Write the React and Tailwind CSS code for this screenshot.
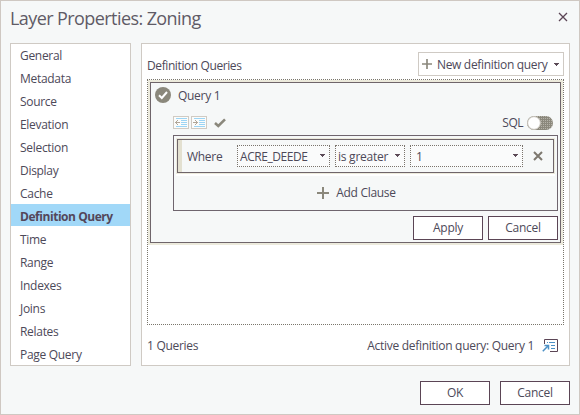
import React from "react";

const sections = [
  ["General", "tracking-[-0.3px]"],
  ["Metadata", "tracking-[-0.3px]"],
  ["Source", "tracking-[-0.3px]"],
  ["Elevation", "tracking-[-0.3px]"],
  ["Selection", "tracking-[-0.3px]"],
  ["Display", "tracking-[-0.3px]"],
  ["Cache", "tracking-[-0.3px]"],
  ["Definition Query", "tracking-[-0.45px]"],
  ["Time", "tracking-[-0.3px]"],
  ["Range", "tracking-[-0.3px]"],
  ["Indexes", "tracking-[-0.3px]"],
  ["Joins", "tracking-[-0.3px]"],
  ["Relates", "tracking-[-0.3px]"],
  ["Page Query", "tracking-[-0.3px]"],
];

function Caret({ className = "" }) {
  return (
    <svg width="5" height="3" viewBox="0 0 5 3" className={`shrink-0 ${className}`} shapeRendering="crispEdges">
      <path d="M0 0h5v1H4v1H3v1H2V2H1V1H0z" fill="#5b4a56" />
    </svg>
  );
}

function Plus({ size }) {
  return (
    <svg width={size} height={size} viewBox="0 0 12 12" className="shrink-0">
      <path d="M6 0v12M0 6h12" stroke="#8b887c" strokeWidth="2" />
    </svg>
  );
}

function IndentIcon({ right }) {
  return (
    <svg width="16" height="13" viewBox="0 0 16 13" className="shrink-0" shapeRendering="crispEdges">
      <rect x="0.5" y="0.5" width="15" height="12" fill="#fbfcfb" stroke="#d0cbc3" />
      <path d="M3 2.5h11M8 4.5h6M8 6.5h6M8 8.5h6M3 10.5h11" stroke="#9cd5f5" />
      {right ? (
        <path d="M2 6h4v1H2zM4 4h1v1H4zM5 5h1v1H5zM6 6h1v1H6zM5 7h1v1H5zM4 8h1v1H4z" fill="#b0a698" />
      ) : (
        <path d="M3 6h4v1H3zM4 4h1v1H4zM3 5h1v1H3zM2 6h1v1H2zM3 7h1v1H3zM4 8h1v1H4z" fill="#b0a698" />
      )}
    </svg>
  );
}

function Combo({ children, className }) {
  return (
    <div className={`flex h-[22px] items-center border border-dotted border-[#7a746c] bg-[#fafbfb] ${className}`}>
      <span className="mt-px grow whitespace-nowrap">{children}</span>
      <Caret className="-mt-0.5" />
    </div>
  );
}

function Button({ children }) {
  return (
    <button className="flex h-6 w-[70px] items-center justify-center border border-[#5b4555] bg-white tracking-[-0.3px]">
      {children}
    </button>
  );
}

export default function App() {
  return (
    <div className="flex h-[415px] w-[580px] flex-col border border-[#cfc8c2] bg-[#f6f8f8] font-['Open_Sans','Noto_Sans',sans-serif] text-[12px] leading-4 text-[#4d4959]">
      <header className="flex h-[42px] items-start justify-between pl-[9px] pr-[11px]">
        <h1 className="mt-[5px] text-[18px] leading-6 font-normal tracking-[-0.58px] text-[#5f5b66]">Layer Properties: Zoning</h1>
        <svg width="10" height="10" viewBox="0 0 10 10" className="mt-[11px]">
          <path d="M1 1l8 8M9 1L1 9" stroke="#5b4555" strokeWidth="1.3" />
        </svg>
      </header>

      <div className="flex h-[323px] gap-2.5 px-[9px]">
        <nav className="w-[121px] border border-[#cfcac4] bg-white">
          <ul className="-mt-px flex flex-col gap-px">
            {sections.map(([name, spacing]) => (
              <li
                key={name}
                className={`h-[22px] whitespace-nowrap pl-[9px] leading-[25px] ${spacing} ${name === "Definition Query" ? "bg-[#a1d8f8] font-bold text-[#54475a]" : ""}`}
              >
                {name}
              </li>
            ))}
          </ul>
        </nav>

        <main className="flex w-[429px] flex-col border border-[#cfcac4] bg-white pl-[5px] pr-[5px] pt-2">
          <div className="flex h-6 items-center justify-between">
            <h2 className="mt-1 tracking-[-0.4px]">Definition Queries</h2>
            <button className="flex h-6 w-[146px] items-center border border-[#cfcac4] pl-[3px] pr-1">
              <Plus size={10} />
              <span className="ml-[5px] mt-0.5 grow whitespace-nowrap text-left tracking-[-0.33px]">New definition query</span>
              <Caret />
            </button>
          </div>

          <div className="mt-[3px] h-[246px] w-[417px] border border-dotted border-[#7a766c]">
            <section className="h-[165px] border-2 border-[#eceadc]">
              <div className="flex h-[161px] flex-col border border-[#6f656a] bg-[#f6f8f8]">
                <div className="flex h-[33px] items-start pl-1 pt-1">
                  <svg width="16" height="16" viewBox="0 0 16 16">
                    <circle cx="8" cy="8" r="8" fill="#8b887c" />
                    <path d="M4 8.2l2.8 2.8L12 5" fill="none" stroke="#fff" strokeWidth="2" />
                  </svg>
                  <span className="ml-[7px] mt-px tracking-[-0.3px]">Query 1</span>
                </div>
                <div className="flex h-[19px] items-start pl-[22px] pr-[7px]">
                  <IndentIcon />
                  <span className="w-0.5" />
                  <IndentIcon right />
                  <svg width="12" height="10" viewBox="0 0 12 10" className="ml-[7px] mt-0.5">
                    <path d="M1 5l3.3 3L11 1.4" fill="none" stroke="#8b887c" strokeWidth="2.6" />
                  </svg>
                  <span className="ml-auto mr-1 -mt-px tracking-[-0.5px]">SQL</span>
                  <svg width="26" height="14" viewBox="0 0 26 14">
                    <defs>
                      <pattern id="dither" width="2" height="2" patternUnits="userSpaceOnUse">
                        <rect width="2" height="2" fill="#8b887c" />
                        <rect width="1" height="1" fill="#b5b2a8" />
                      </pattern>
                    </defs>
                    <rect width="26" height="14" rx="7" fill="url(#dither)" />
                    <circle cx="7" cy="7" r="6.4" fill="#fff" stroke="#c5c1b8" />
                  </svg>
                </div>

                <div className="ml-[22px] h-[76px] w-[385px] border border-[#6f656e] p-[2px]">
                  <div className="border border-[#eceadc]">
                    <div className="flex h-[34px] items-center border border-[#6f656a] pr-2">
                      <span className="h-full w-1 bg-[#e3e0d0]" />
                      <span className="ml-[5px] mt-px w-[50px] tracking-[-0.3px]">Where</span>
                      <Combo className="w-[93px] pl-0.5 pr-1 tracking-[-0.45px]">ACRE_DEEDE</Combo>
                      <Combo className="ml-[5px] w-[70px] pl-0.5 pr-1 tracking-[-0.25px]">is greater</Combo>
                      <Combo className="ml-[5px] w-[113px] pl-[5px] pr-1">1</Combo>
                      <svg width="10" height="10" viewBox="0 0 10 10" className="ml-2.5">
                        <path d="M1 1l8 8M9 1L1 9" stroke="#7d786f" strokeWidth="2" />
                      </svg>
                    </div>
                  </div>
                  <div className="flex h-[35px] items-center justify-center gap-[7px] border-t-2 border-white pr-[18px]">
                    <Plus size={12} />
                    <span className="mt-px tracking-[-0.3px]">Add Clause</span>
                  </div>
                </div>

                <div className="mt-[5px] flex justify-end gap-[5px] pr-[2px]">
                  <Button>Apply</Button>
                  <Button>Cancel</Button>
                </div>
              </div>
            </section>
          </div>

          <footer className="mt-[11px] flex items-center justify-between">
            <span className="mt-0.5 tracking-[-0.3px]">1 Queries</span>
            <div className="flex items-center gap-2 pr-[6px]">
              <span className="mt-0.5 tracking-[-0.29px]">Active definition query: Query 1</span>
              <svg width="16" height="13" viewBox="0 0 16 13">
                <path d="M2.5 5V.5h13v12H8" fill="none" stroke="#5b4555" />
                <path d="M5 3.5h1M7 3.5h6M9 6.5h4M9 9.5h4" fill="none" stroke="#4d91c6" />
                <path d="M.8 12.2l5.4-5.4M2.5 6.5h4v4" fill="none" stroke="#4d91c6" strokeWidth="1.5" />
              </svg>
            </div>
          </footer>
        </main>
      </div>

      <footer className="mt-[15px] flex justify-end gap-2.5 pr-[9px]">
        <Button>OK</Button>
        <Button>Cancel</Button>
      </footer>
    </div>
  );
}
